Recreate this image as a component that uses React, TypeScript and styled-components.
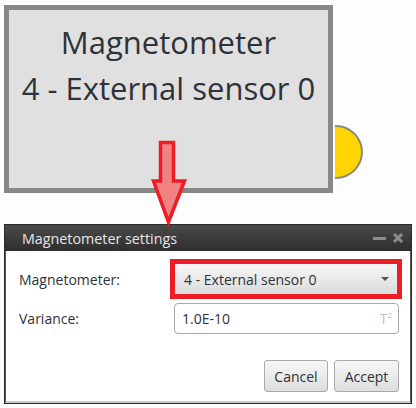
import styled, { createGlobalStyle } from "styled-components";

const GlobalStyle = createGlobalStyle`
  html, body {
    margin: 0;
    padding: 0;
    background: #fdfdfd;
  }
  * {
    box-sizing: border-box;
  }
`;

const Page = styled.div`
  position: relative;
  width: 416px;
  height: 408px;
  background: #fdfdfd;
  font-family: "Open Sans", "Noto Sans", sans-serif;
  overflow: hidden;
`;

const Canvas = styled.div`
  height: 224px;
  padding: 5px 0 0 4px;
`;

const NodeWrap = styled.div`
  position: relative;
  width: 329px;
`;

const Node = styled.div`
  width: 329px;
  height: 188px;
  border: 5px solid #888888;
  background: #e0e0e0;
  padding-top: 9px;
  text-align: center;
  color: #2f3238;
  font-size: 31px;
  line-height: 46px;
`;

const Port = styled.div`
  position: absolute;
  left: 331px;
  top: 120px;
  width: 28px;
  height: 54px;
  background: #ffd400;
  border: 2px solid #8a8a80;
  border-left: none;
  border-radius: 0 27px 27px 0;
`;

const Arrow = styled.svg`
  position: absolute;
  left: 150px;
  top: 139px;
  z-index: 2;
`;

const Dialog = styled.div`
  margin: 0 4px;
  width: 408px;
  height: 180px;
  display: flex;
  flex-direction: column;
  border: 1px solid #2c2c2c;
  background: #ffffff;
`;

const TitleBar = styled.div`
  height: 26px;
  flex: 0 0 auto;
  display: flex;
  align-items: center;
  justify-content: space-between;
  padding: 0 7px 0 17px;
  background: linear-gradient(#4a4a4a, #2e2e2e);
  color: #e6e6e6;
  font-size: 14.3px;
`;

const TitleIcons = styled.div`
  display: flex;
  align-items: center;
  gap: 5px;
`;

const Body = styled.div`
  flex: 1;
  display: flex;
  flex-direction: column;
  padding: 13px 11px 0 13px;
  border-left: 1px solid #555;
  border-right: 1px solid #555;
  border-bottom: 2px solid #c8c8c8;
`;

const Form = styled.div`
  display: grid;
  grid-template-columns: 155px 225px;
  row-gap: 9px;
  align-items: center;
`;

const Label = styled.div`
  font-size: 14px;
  color: #2f3238;
`;

const Combo = styled.div`
  margin-left: 1px;
  width: 222px;
  height: 30px;
  display: flex;
  align-items: center;
  justify-content: space-between;
  padding: 0 8px 0 9px;
  background: linear-gradient(#f6f6f6, #dcdcdc);
  outline: 5px solid #ee1c24;
  font-size: 14px;
  color: #2f3238;
`;

const Caret = styled.span`
  width: 0;
  height: 0;
  border-left: 4px solid transparent;
  border-right: 4px solid transparent;
  border-top: 4px solid #555;
`;

const Field = styled.div`
  height: 31px;
  display: flex;
  align-items: center;
  justify-content: space-between;
  padding: 0 6px 0 7px;
  border: 1px solid #a8a8a8;
  border-radius: 4px;
  background: #fff;
  font-size: 14px;
  color: #2f3238;
`;

const Unit = styled.span`
  color: #c0c0c0;
  font-size: 14px;
  sup {
    font-size: 8px;
    vertical-align: 6px;
  }
`;

const Actions = styled.div`
  display: flex;
  justify-content: flex-end;
  gap: 6px;
  margin-top: 26px;
`;

const Button = styled.button<{ $w: number }>`
  width: ${(p) => p.$w}px;
  height: 32px;
  padding: 0;
  font-family: inherit;
  font-size: 14px;
  color: #2f3238;
  border: 1px solid #aaaaaa;
  border-radius: 3px;
  background: linear-gradient(#f7f7f7, #dedede);
`;

export default function App() {
  return (
    <Page>
      <GlobalStyle />
      <Canvas>
        <NodeWrap>
          <Node>
            Magnetometer
            <br />4 - External sensor 0
          </Node>
          <Port />
        </NodeWrap>
      </Canvas>
      <Arrow width="40" height="88" viewBox="0 0 40 88">
        <polygon
          points="10.5,3.5 23.5,3.5 23.5,42 34.5,42 18.5,83 3.5,42 10.5,42"
          fill="#f08282"
          stroke="#ee1c24"
          strokeWidth="3.5"
          strokeLinejoin="miter"
        />
      </Arrow>
      <Dialog>
        <TitleBar>
          <span>Magnetometer settings</span>
          <TitleIcons>
            <svg width="14" height="12" viewBox="0 0 14 12">
              <rect x="0" y="5" width="13" height="3" fill="#8c8c8c" />
            </svg>
            <svg width="12" height="12" viewBox="0 0 12 12">
              <path d="M2 2 L10 10 M10 2 L2 10" stroke="#8c8c8c" strokeWidth="3" />
            </svg>
          </TitleIcons>
        </TitleBar>
        <Body>
          <Form>
            <Label>Magnetometer:</Label>
            <Combo>
              <span>4 - External sensor 0</span>
              <Caret />
            </Combo>
            <Label>Variance:</Label>
            <Field>
              <span>1.0E-10</span>
              <Unit>
                T<sup>2</sup>
              </Unit>
            </Field>
          </Form>
          <Actions>
            <Button $w={64}>Cancel</Button>
            <Button $w={65}>Accept</Button>
          </Actions>
        </Body>
      </Dialog>
    </Page>
  );
}
